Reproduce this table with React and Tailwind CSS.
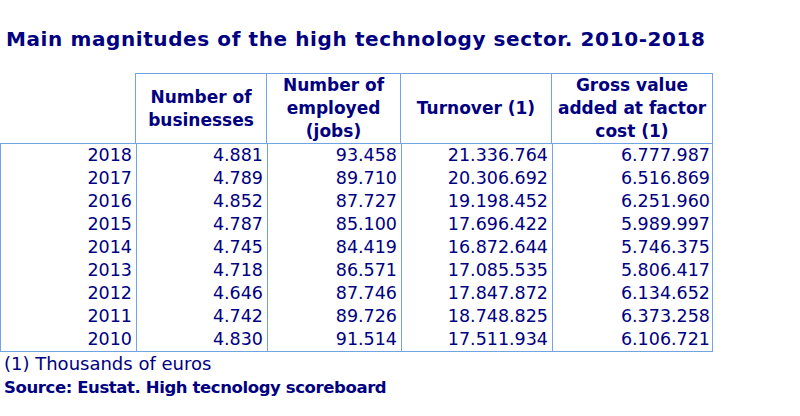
import React from "react";

const rows = [
  ["2018", "4.881", "93.458", "21.336.764", "6.777.987"],
  ["2017", "4.789", "89.710", "20.306.692", "6.516.869"],
  ["2016", "4.852", "87.727", "19.198.452", "6.251.960"],
  ["2015", "4.787", "85.100", "17.696.422", "5.989.997"],
  ["2014", "4.745", "84.419", "16.872.644", "5.746.375"],
  ["2013", "4.718", "86.571", "17.085.535", "5.806.417"],
  ["2012", "4.646", "87.746", "17.847.872", "6.134.652"],
  ["2011", "4.742", "89.726", "18.748.825", "6.373.258"],
  ["2010", "4.830", "91.514", "17.511.934", "6.106.721"],
];

const bodyW = ["w-[136px]", "w-[131px]", "w-[134px]", "w-[151px]", "w-[161px]"];

export default function App() {
  return (
    <div className="w-[800px] h-[416px] bg-white text-[#000080] font-['DejaVu_Sans',sans-serif] overflow-hidden">
      <h1 className="pt-[27px] pl-[6px] text-[20px] leading-[24px] font-bold tracking-[0.6px]">
        Main magnitudes of the high technology sector. 2010-2018
      </h1>
      <div className="mt-[22px] w-[713px]">
        <div className="flex h-[70px] text-[17px] leading-[23px] font-bold">
          <div className="w-[135px] shrink-0" />
          <div className="w-[132px] shrink-0 border-t border-l border-r border-[#72a3e3] flex items-center justify-center text-center">
            Number of<br />businesses
          </div>
          <div className="w-[134px] shrink-0 border-t border-r border-[#72a3e3] flex items-center justify-center text-center">
            Number of<br />employed<br />(jobs)
          </div>
          <div className="w-[151px] shrink-0 border-t border-r border-[#72a3e3] flex items-center justify-center text-center">
            Turnover (1)
          </div>
          <div className="w-[161px] shrink-0 border-t border-r border-[#72a3e3] flex items-center justify-center text-center">
            Gross value<br />added at factor<br />cost (1)
          </div>
        </div>
        <div className="border border-[#72a3e3] w-[713px] text-[17.5px] leading-[23px]">
          {rows.map((r) => (
            <div key={r[0]} className="flex h-[23px]">
              {r.map((c, i) => (
                <div
                  key={i}
                  className={`${bodyW[i]} shrink-0 text-right pr-[4px] ${i < 4 ? "border-r border-[#72a3e3]" : ""}`}
                >
                  {c}
                </div>
              ))}
            </div>
          ))}
        </div>
      </div>
      <div className="pl-[4px] leading-[24px]">
        <div className="text-[18px]">(1) Thousands of euros</div>
        <div className="font-bold text-[16.5px] tracking-[-0.4px]">Source: Eustat. High tecnology scoreboard</div>
      </div>
    </div>
  );
}
